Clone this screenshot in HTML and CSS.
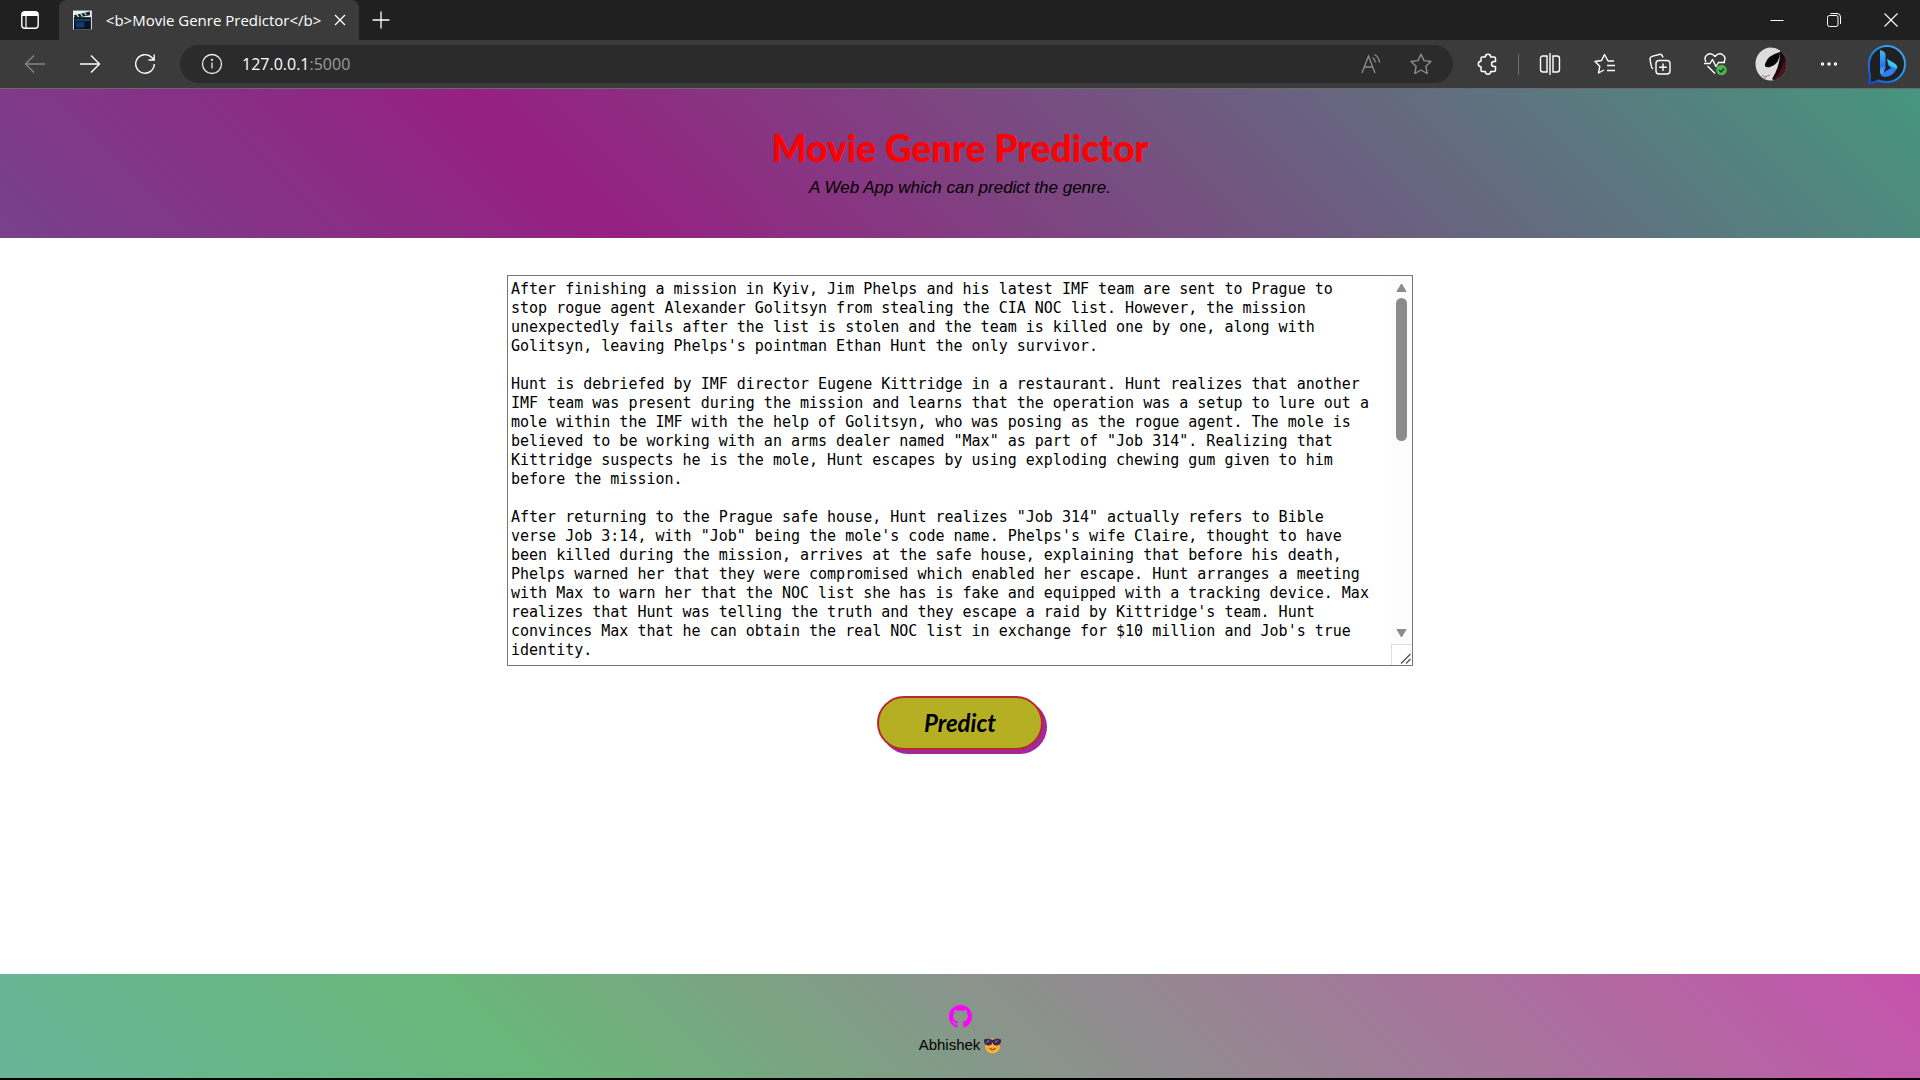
FILE: index.html
```html
<!DOCTYPE html>
<html lang="en">
<head>
<meta charset="utf-8">
<title>&lt;b&gt;Movie Genre Predictor&lt;/b&gt;</title>
<link rel="stylesheet" href="styles.css">
</head>
<body>
<div class="browser">
  <div class="tab-strip">
    <button class="tab-menu" aria-label="Tab actions"><svg width="20" height="20" viewBox="0 0 20 20"><rect x="1.8" y="1.8" width="16.4" height="16.4" rx="3" fill="none" stroke="#fff" stroke-width="1.4"/><path d="M2 6V4.500Q2 2 4.500 2H15.500Q18 2 18 4.500V6Z" fill="#fff"/><path d="M6 6V18" stroke="#fff" stroke-width="1.2"/></svg></button>
    <div class="tab">
      <svg class="favicon" width="20" height="20" viewBox="0 0 20 20"><rect width="20" height="20" fill="#e8f1f4"/><path d="M1 5 18 1V5L2 8Z" fill="#16222c"/><path d="M4 4 6 7M8 3 10 6M12 2 14 5" stroke="#dff2f8" stroke-width="1.2"/><rect x="1" y="7" width="18" height="13" fill="#071522"/><path d="M2 10H18" stroke="#235a7d" stroke-width="1.500"/><rect x="3" y="12" width="9" height="6" fill="#0d3a6b"/></svg>
      <span class="tab-title">&lt;b&gt;Movie Genre Predictor&lt;/b&gt;</span>
      <button class="tab-close" aria-label="Close tab"><svg width="12" height="12" viewBox="0 0 12 12"><path d="M1 1 11 11M11 1 1 11" stroke="#fff" stroke-width="1.3"/></svg></button>
    </div>
    <button class="new-tab" aria-label="New tab"><svg width="18" height="18" viewBox="0 0 18 18"><path d="M9 0.500V17.500M0.500 9H17.500" stroke="#fff" stroke-width="1.3"/></svg></button>
    <div class="window-buttons">
      <button aria-label="Minimize"><svg width="14" height="14" viewBox="0 0 14 14"><path d="M0.500 7.500H13.500" stroke="#fff"/></svg></button>
      <button aria-label="Restore"><svg width="14" height="14" viewBox="0 0 14 14" fill="none" stroke="#fff"><rect x="0.500" y="2.500" width="10.500" height="11" rx="2"/><path d="M3.500 0.500H10Q13.500 0.500 13.500 4V11"/></svg></button>
      <button aria-label="Close"><svg width="14" height="14" viewBox="0 0 14 14"><path d="M0.500 0.500 13.500 13.500M13.500 0.500 0.500 13.500" stroke="#fff" stroke-width="1.1"/></svg></button>
    </div>
  </div>
  <div class="toolbar">
    <div class="nav-buttons">
      <button aria-label="Back"><svg width="22" height="22" viewBox="0 0 22 22" fill="none" stroke="#858585" stroke-width="1.4"><path d="M21 11H1.500M10 2.500 1.500 11 10 19.500"/></svg></button>
      <button aria-label="Forward"><svg width="22" height="22" viewBox="0 0 22 22" fill="none" stroke="#fff" stroke-width="1.4"><path d="M1 11H20.500M12 2.500 20.500 11 12 19.500"/></svg></button>
      <button aria-label="Refresh"><svg width="22" height="22" viewBox="0 0 22 22" fill="none" stroke="#fff" stroke-width="1.4"><path d="M20.300 11A9.300 9.300 0 1 1 17.800 4.600L20 7M20.200 1.500V7H14.500"/></svg></button>
    </div>
    <div class="address">
      <button class="site-info" aria-label="Site information"><svg width="22" height="22" viewBox="0 0 22 22" fill="none" stroke="#e8e8e8" stroke-width="1.3"><circle cx="11" cy="11" r="9.500"/><path d="M11 9.500V15.500"/><circle cx="11" cy="6.800" r=".5" fill="#fff"/></svg></button>
      <a class="url" href="#">127.0.0.1<span class="port">:5000</span></a>
      <button aria-label="Read aloud"><svg width="22" height="22" viewBox="0 0 22 22" fill="none" stroke="#8f8f8f" stroke-width="1.3"><path d="M2 20 8.500 3 15 20M4.300 14H12.700M12.500 4.500Q15 6 15.500 9.500M14.500 1.500Q19 4 19.500 9.500"/></svg></button>
      <button aria-label="Add to favorites"><svg width="22" height="22" viewBox="0 0 22 22" fill="none" stroke="#8f8f8f" stroke-width="1.4" stroke-linejoin="round"><path d="M11 1.200 14 7.600 21 8.500 15.900 13.300 17.200 20.500 11 17 4.800 20.500 6.100 13.300 1 8.500 8 7.600Z"/></svg></button>
    </div>
    <div class="tools">
      <button aria-label="Extensions"><svg width="22" height="22" viewBox="0 0 22 22" fill="none" stroke="#fff" stroke-width="1.5" stroke-linejoin="round"><path d="M5 4H8.300A2.700 2.700 0 0 1 13.700 4H17Q18.500 4 18.500 5.500V8.500H17A2.500 2.500 0 0 0 17 13.500H18.500V17Q18.500 18.500 17 18.500H13.700A2.700 2.700 0 0 1 8.300 18.500H5Q4 18.500 4 17V13.700A2.700 2.700 0 0 1 4 8.300V5.500Q4 4 5 4Z"/></svg></button>
      <span class="divider"></span>
      <button aria-label="Split screen"><svg width="22" height="22" viewBox="0 0 22 22" fill="none" stroke="#fff" stroke-width="1.4"><path d="M8 3H4Q1.500 3 1.500 5.500V16.500Q1.500 19 4 19H8ZM14 3H18Q20.500 3 20.500 5.500V16.500Q20.500 19 18 19H14ZM11 0V22"/></svg></button>
      <button aria-label="Favorites"><svg width="22" height="22" viewBox="0 0 22 22" fill="none" stroke="#fff" stroke-width="1.4" stroke-linejoin="round"><path d="M20 8H14L10.500 1.500 7.500 7.500 1 8.500 5.800 13.200 4.500 20 10 17M13 12.500H21M13 17.500H21"/></svg></button>
      <button aria-label="Collections"><svg width="22" height="22" viewBox="0 0 22 22" fill="none" stroke="#fff" stroke-width="1.4"><rect x="7" y="7.500" width="14" height="13.500" rx="3"/><path d="M14 10.500V18M10.200 14.300H17.800M4 16Q2.500 15 2 12L1 6.500Q.7 4 3 3.300L11 1.200Q13 1 14 4.500"/></svg></button>
      <button aria-label="Browser essentials"><svg width="24" height="24" viewBox="0 0 24 24" fill="none" stroke="#fff" stroke-width="1.4" stroke-linejoin="round"><path d="M3 10Q.5 5.500 4 3 8 0 12 4.500 16 0 20 3 23.500 5.500 21 10M1 11.500H7L9.500 7.500 13 14.500 15.500 10.500H22M4.500 14 12 21.500"/><circle cx="18.500" cy="18" r="5.300" fill="#4db34f" stroke="none"/><path d="M16 18 18 20 21 16.500" stroke="#173c18"/></svg></button>
      <button class="wide" aria-label="Profile"><svg width="32" height="34" viewBox="0 0 32 34"><defs><clipPath id="face"><ellipse cx="16" cy="17" rx="15.500" ry="16.500"/></clipPath></defs><g clip-path="url(#face)"><rect width="32" height="34" fill="#ddd"/><path d="M25 2Q34 8 32 24L20 34 17 32Q26 18 25 2Z" fill="#180a0d"/><path d="M29 14Q26 25 18 34H23Q32 27 32 14Z" fill="#4b111c"/><path d="M10 17Q13 8 25 5 25 17 15 20 9 21 10 17Z" fill="#050505"/><path d="M7 28 10 30 15 28M10 29V32" stroke="#888" fill="none"/></g></svg></button>
      <button class="wide" aria-label="Settings and more"><svg width="18" height="6" viewBox="0 0 18 6" fill="#fff"><circle cx="2.500" cy="3" r="1.700"/><circle cx="9" cy="3" r="1.700"/><circle cx="15.500" cy="3" r="1.700"/></svg></button>
      <button class="wide" aria-label="Bing"><svg width="40" height="42" viewBox="0 0 40 42"><defs><linearGradient id="ring" x1="1" y1="0" x2="0" y2="1"><stop offset="0" stop-color="#4aa4f5"/><stop offset=".5" stop-color="#1a90e8"/><stop offset="1" stop-color="#1646dc"/></linearGradient><linearGradient id="bee" x1="0" y1="0" x2="0" y2="1"><stop offset="0" stop-color="#42bdf5"/><stop offset=".6" stop-color="#2674ef"/><stop offset="1" stop-color="#4bd8f2"/></linearGradient></defs><path d="M2 40Q4 36 2 27V21A18 18 0 1 1 20 39Q14 39 11 37.500Q7 40 2 40Z" fill="#202020" stroke="url(#ring)" stroke-width="2"/><path d="M13 7Q18 8.500 18.500 11V25L15 33Q13 31 13 28Z" fill="url(#bee)"/><path d="M20 16 27 20Q31 23 29 27 26 33 18 34 15 34 14 31L24 25 21 22Z" fill="#2f7df3"/><path d="M20 16 27 20Q31 22 30 26L22 22Z" fill="#35cce8"/></svg></button>
    </div>
  </div>
</div>

<header class="page-header">
  <h1>Movie Genre Predictor</h1>
  <p>A Web App which can predict the genre.</p>
</header>

<main>
  <form class="predict-form">
    <div class="plot-box">
      <textarea class="plot" aria-label="Movie plot" spellcheck="false">After finishing a mission in Kyiv, Jim Phelps and his latest IMF team are sent to Prague to stop rogue agent Alexander Golitsyn from stealing the CIA NOC list. However, the mission unexpectedly fails after the list is stolen and the team is killed one by one, along with Golitsyn, leaving Phelps's pointman Ethan Hunt the only survivor.

Hunt is debriefed by IMF director Eugene Kittridge in a restaurant. Hunt realizes that another IMF team was present during the mission and learns that the operation was a setup to lure out a mole within the IMF with the help of Golitsyn, who was posing as the rogue agent. The mole is believed to be working with an arms dealer named "Max" as part of "Job 314". Realizing that Kittridge suspects he is the mole, Hunt escapes by using exploding chewing gum given to him before the mission.

After returning to the Prague safe house, Hunt realizes "Job 314" actually refers to Bible verse Job 3:14, with "Job" being the mole's code name. Phelps's wife Claire, thought to have been killed during the mission, arrives at the safe house, explaining that before his death, Phelps warned her that they were compromised which enabled her escape. Hunt arranges a meeting with Max to warn her that the NOC list she has is fake and equipped with a tracking device. Max realizes that Hunt was telling the truth and they escape a raid by Kittridge's team. Hunt convinces Max that he can obtain the real NOC list in exchange for $10 million and Job's true identity.</textarea>
      <div class="scrollbar" aria-hidden="true">
        <span class="arrow"><svg width="11" height="9" viewBox="0 0 11 9"><path d="M1 8.500 5.500 1 10 8.500Z" fill="#8b8b8b" stroke="#8b8b8b" stroke-linejoin="round"/></svg></span>
        <span class="thumb"></span>
        <span class="arrow arrow-down"><svg width="11" height="9" viewBox="0 0 11 9"><path d="M1 .5 5.500 8 10 .5Z" fill="#8b8b8b" stroke="#8b8b8b" stroke-linejoin="round"/></svg></span>
        <span class="grip"><svg width="11" height="11" viewBox="0 0 11 11"><path d="M1 10.500 10.500 1M6 10.500 10.500 6" stroke="#505050" stroke-width="1.3"/></svg></span>
      </div>
    </div>
    <button type="submit" class="predict">Predict</button>
  </form>
</main>

<footer class="page-footer">
  <a href="#" aria-label="GitHub"><svg width="23" height="23" viewBox="0 0 16 16" fill="#f0f"><path d="M8 0C3.580 0 0 3.580 0 8c0 3.540 2.290 6.530 5.470 7.590.4.070.55-.17.55-.38 0-.19-.01-.82-.01-1.490-2.010.37-2.530-.49-2.690-.94-.09-.23-.48-.94-.82-1.130-.28-.15-.68-.52-.01-.53.63-.01 1.080.58 1.230.82.72 1.210 1.870.87 2.330.66.07-.52.28-.87.51-1.070-1.780-.2-3.640-.89-3.640-3.950 0-.87.31-1.590.82-2.150-.08-.2-.36-1.020.08-2.120 0 0 .67-.21 2.200.82.64-.18 1.320-.27 2-.27s1.360.09 2 .27c1.530-1.040 2.200-.82 2.200-.82.44 1.100.16 1.920.08 2.120.51.56.82 1.270.82 2.150 0 3.070-1.870 3.750-3.650 3.950.29.25.54.73.54 1.480 0 1.070-.01 1.930-.01 2.200 0 .21.15.46.55.38A8.010 8.010 0 0 0 16 8c0-4.420-3.580-8-8-8Z"/></svg></a>
  <p>Abhishek <svg width="17" height="17" viewBox="0 0 17 17"><circle cx="8.500" cy="9" r="7.500" fill="#ffb02e"/><path d="M0 2.500Q4 1 8.500 3 13 1 17 2.500V5Q16 8.500 12.500 8.500T8.500 5Q8 8.500 4.500 8.500T0 5Z" fill="#3d2650"/><path d="M2.500 5.500 5 3.500M11 5.500 13.500 3.500" stroke="#b995d8"/><path d="M5.500 11.500Q8.500 14 11.500 11.500" fill="none" stroke="#402a32"/></svg></p>
</footer>
</body>
</html>
```
FILE: styles.css
```css
* { box-sizing: border-box; }

body {
  margin: 0;
  min-height: 100vh;
  display: flex;
  flex-direction: column;
  background: #fff;
  border-bottom: 2px solid #000;
  font-family: "Liberation Sans", Arial, sans-serif;
  color: #000;
}

.browser { font-family: "Open Sans", "Noto Sans", sans-serif; color: #fff; }
.browser button {
  display: flex;
  align-items: center;
  justify-content: center;
  padding: 0;
  border: 0;
  background: none;
  height: 40px;
}
svg { display: block; }

.tab-strip { display: flex; height: 40px; padding-right: 1px; background: #202020; }
.tab-strip .tab-menu { width: 59px; }
.tab {
  display: flex;
  align-items: center;
  width: 300px;
  padding-left: 14px;
  background: #3b3b3b;
  border-radius: 8px 8px 0 0;
}
.tab-title {
  flex: 1;
  padding-left: 14px;
  font-size: 15px;
  line-height: 20px;
  white-space: nowrap;
}
.tab .tab-close { width: 40px; }
.tab-strip .new-tab { width: 43px; }
.window-buttons { display: flex; margin-left: auto; }
.window-buttons button { width: 57px; }

.toolbar {
  display: flex;
  align-items: center;
  height: 49px;
  padding: 0 4px 0 7px;
  background: #3b3b3b;
  border-bottom: 1px solid #6a6a6a;
}
.nav-buttons, .tools { display: flex; align-items: center; }
.nav-buttons { margin-right: 8px; }
.nav-buttons button, .tools button { width: 55px; }
.tools .wide { width: 58px; }
.tools { margin-left: 7px; }
.divider { width: 1px; height: 21px; margin: 0 3px; background: #707070; }
.address {
  flex: 1;
  display: flex;
  align-items: center;
  height: 38px;
  padding: 0 7px;
  border-radius: 19px;
  background: #2b2b2b;
}
.address button { width: 50px; }
.url {
  flex: 1;
  padding-left: 5px;
  color: #fff;
  font-size: 16px;
  line-height: 22px;
  text-decoration: none;
}
.port { color: #9a9a9a; }

.page-header {
  padding: 36px 0 39px;
  text-align: center;
  background: linear-gradient(45deg, #774289, #962082 30%, #46967e);
}
.page-header h1 {
  margin: 0;
  font: 900 37px/46px Lato, sans-serif;
  color: #f00;
}
.page-header p { margin: 6px 0 0; font-size: 17px; line-height: 22px; font-style: italic; }

main { flex: 1; padding: 37px 0; }
.predict-form { display: flex; flex-direction: column; align-items: center; gap: 30px; }

.plot-box {
  display: flex;
  width: 906px;
  max-width: 100%;
  height: 391px;
  border: 1px solid #767676;
}
.plot {
  flex: 1;
  padding: 4px 18px 4px 3px;
  border: 0;
  outline: 0;
  background: #fff;
  color: #000;
  font: 15px/19px "DejaVu Sans Mono", monospace;
  resize: none;
}
.scrollbar {
  display: flex;
  flex-direction: column;
  align-items: center;
  width: 21px;
  background: #fcfcfc;
}
.arrow {
  display: grid;
  place-items: center;
  height: 22px;
}
.thumb {
  width: 11px;
  height: 143px;
  border-radius: 6px;
  background: #8b8b8b;
}
.arrow-down { margin-top: auto; }
.grip {
  display: grid;
  place-items: end;
  width: 21px;
  height: 21px;
  padding: 1px;
  border: 1px solid #dcdcdc;
  border-width: 1px 0 0 1px;
  background: #fff;
}

.predict {
  width: 166px;
  height: 54px;
  padding: 0;
  border: 2px solid #b42a2e;
  border-radius: 27px;
  background: #b5b023;
  box-shadow: 4px 4px 0 #a3299a;
  color: #000;
  font: italic bold 24px/30px Lato, sans-serif;
}

.page-footer {
  display: flex;
  flex-direction: column;
  align-items: center;
  padding: 31px 0 23px;
  background: linear-gradient(45deg, #67b498, #69b779 27%, #c652ad);
}
.page-footer p {
  display: flex;
  align-items: center;
  gap: 4px;
  margin: 7px 0 0;
  font-size: 15px;
  line-height: 20px;
}
```
